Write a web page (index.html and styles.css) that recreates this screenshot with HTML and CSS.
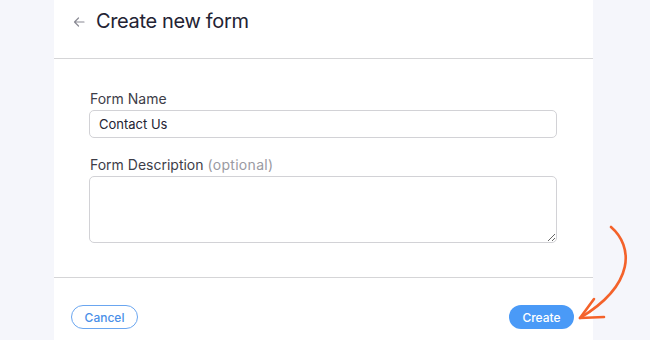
FILE: index.html
```html
<!DOCTYPE html>
<html lang="en">

<head>
    <meta charset="UTF-8">
    <meta name="viewport" content="width=device-width, initial-scale=1.0">
    <title>Create new form</title>
    <link rel="stylesheet" href="styles.css">
</head>

<body>
    <div class="panel">
        <div class="panel-header">
            <a href="#" class="back">
                <svg width="12" height="12" viewBox="0 0 12 12" fill="none" stroke="#8a8a94" stroke-width="1.2" stroke-linecap="round" stroke-linejoin="round">
                    <path d="M11 6H1.5M5.5 2L1.5 6L5.5 10" />
                </svg>
            </a>
            <h1>Create new form</h1>
        </div>
        <form class="panel-body" action="#">
            <div class="form-group">
                <label for="formName">Form Name</label>
                <input type="text" id="formName" value="Contact Us">
            </div>
            <div class="form-group">
                <label for="formDesc">Form Description <span class="optional">(optional)</span></label>
                <textarea id="formDesc"></textarea>
            </div>
        </form>
        <div class="panel-footer">
            <button type="button" class="btn btn-outline">Cancel</button>
            <button type="button" class="btn btn-primary">Create</button>
        </div>
    </div>

    <!-- annotation arrow pointing at the Create button -->
    <svg class="annotation" width="650" height="340" viewBox="0 0 650 340" fill="none" stroke="#f4622a" stroke-width="2.6" stroke-linecap="round" stroke-linejoin="round">
        <path d="M611 227 C633 246 636 284 580 318" />
        <path d="M594 299 L580 318 L604 317" />
    </svg>
</body>

</html>
```

FILE: styles.css
```css
body {
    margin: 0;
    font-family: Inter, "Open Sans", sans-serif;
    background-color: #f5f6fb;
    height: 340px;
    overflow: hidden;
}

.panel {
    margin-left: 54px;
    width: 539px;
    height: 340px;
    background-color: #fff;
}

.panel-header {
    display: flex;
    align-items: center;
    height: 41px;
    padding: 0 0 17px 19px;
    border-bottom: 1px solid #d5d5d7;
}

.back {
    display: flex;
    width: 12px;
    height: 12px;
    margin-right: 11px;
    margin-top: 2px;
}

.panel-header h1 {
    margin: 0;
    font-size: 20px;
    font-weight: 400;
    color: #232333;
    letter-spacing: -0.35px;
}

.panel-body {
    padding: 31px 36px 0 35px;
    height: 187px;
    border-bottom: 1px solid #d5d5d7;
}

.form-group {
    margin-bottom: 18px;
}

.form-group label {
    display: block;
    font-size: 14px;
    color: #3d3d48;
    line-height: 17px;
    margin-bottom: 3px;
    padding-left: 1px;
}

.form-group .optional {
    color: #9a9aa2;
    letter-spacing: 0.3px;
}

.form-group input,
.form-group textarea {
    box-sizing: border-box;
    width: 468px;
    border: 1px solid #d2d2d6;
    border-radius: 5px;
    font-family: inherit;
    font-size: 13px;
    color: #232333;
    outline: none;
}

.form-group input {
    height: 28px;
    padding: 0 9px;
}

.form-group textarea {
    display: block;
    height: 67px;
    padding: 6px 9px;
}

.panel-footer {
    display: flex;
    justify-content: space-between;
    padding: 27px 19px 0 17px;
}

.btn {
    height: 24px;
    border-radius: 12px;
    font-family: inherit;
    font-size: 12px;
    font-weight: 500;
    cursor: pointer;
}

.btn-outline {
    width: 67px;
    background-color: #fff;
    color: #4a8fe8;
    border: 1px solid #6aa6f0;
}

.btn-primary {
    width: 65px;
    background-color: #4a9af7;
    color: #fff;
    border: none;
}

.annotation {
    position: absolute;
    top: 0;
    left: 0;
    pointer-events: none;
}
```
